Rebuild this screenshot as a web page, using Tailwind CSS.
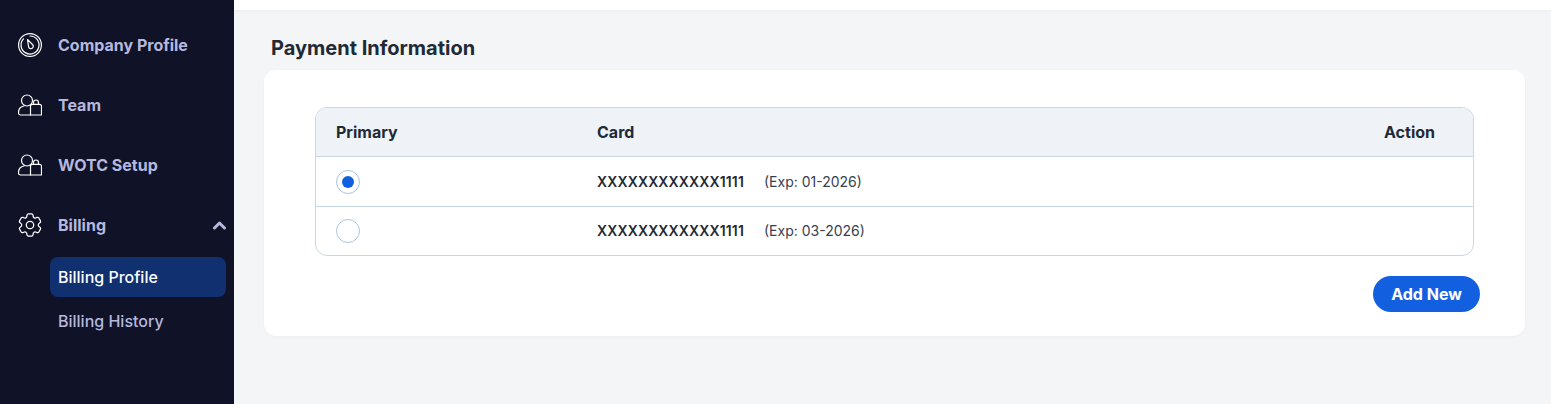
<!DOCTYPE html>
<html lang="en">
<head>
  <meta charset="UTF-8" />
  <meta name="viewport" content="width=device-width, initial-scale=1.0"/>
  <script src="https://cdn.jsdelivr.net/npm/@tailwindcss/browser@4"></script>
  <title>Payment Information</title>
</head>
<body class="font-['Inter',sans-serif] bg-[#f4f5f7] h-[404px] overflow-hidden flex">
  <aside class="w-[234px] h-[404px] shrink-0 bg-[#101227] pt-[15px] text-[#b6b8de] text-base font-bold">
    <a class="flex items-center h-[60px] pl-[18px]">
      <svg class="w-6 h-6 mr-4" viewBox="0 0 24 24" fill="none" stroke="#fff" stroke-width="1.2" stroke-linecap="round" stroke-linejoin="round">
        <circle cx="12" cy="12" r="11.400"/>
        <path d="M12 3A9 9 0 1 1 5.500 5.800"/>
        <path d="M9.500 6.500l5 5a2.400 2.400 0 1 1-3.900 2.500z"/>
      </svg>
      Company Profile
    </a>
    <a class="flex items-center h-[60px] pl-[18px]">
      <svg class="w-6 h-6 mr-4" viewBox="0 0 24 24" fill="none" stroke="#fff" stroke-width="1.2" stroke-linecap="round" stroke-linejoin="round">
        <circle cx="9" cy="7.500" r="5.500"/>
        <path d="M12.500 22H2.500a2 2 0 0 1-2-2v-.5c0-3.500 2.500-6 5.500-6.500"/>
        <path d="M12.500 13.300a2 2 0 0 1 2-2h7a2 2 0 0 1 2 2V22h-11z"/>
        <path d="M15.500 11.300V9.500a2.500 2.500 0 0 1 5 0v1.800"/>
      </svg>
      Team
    </a>
    <a class="flex items-center h-[60px] pl-[18px]">
      <svg class="w-6 h-6 mr-4" viewBox="0 0 24 24" fill="none" stroke="#fff" stroke-width="1.2" stroke-linecap="round" stroke-linejoin="round">
        <circle cx="9" cy="7.500" r="5.500"/>
        <path d="M12.500 22H2.500a2 2 0 0 1-2-2v-.5c0-3.500 2.500-6 5.500-6.500"/>
        <path d="M12.500 13.300a2 2 0 0 1 2-2h7a2 2 0 0 1 2 2V22h-11z"/>
        <path d="M15.500 11.300V9.500a2.500 2.500 0 0 1 5 0v1.800"/>
      </svg>
      WOTC Setup
    </a>
    <a class="flex items-center h-[60px] pl-[18px] pr-[7px]">
      <svg class="w-6 h-6 mr-4" viewBox="2.300 2.300 19.400 19.400" fill="none" stroke="#fff" stroke-width="1" stroke-linecap="round" stroke-linejoin="round">
        <path d="M9.594 3.940c.09-.542.56-.94 1.110-.94h2.593c.55 0 1.020.398 1.110.94l.213 1.281c.063.374.313.686.645.870.074.040.147.083.22.127.325.196.72.257 1.075.124l1.217-.456a1.125 1.125 0 0 1 1.370.490l1.296 2.247a1.125 1.125 0 0 1-.26 1.431l-1.003.827c-.293.241-.438.613-.43.992a7.723 7.723 0 0 1 0 .255c-.008.378.137.75.43.991l1.004.827c.424.35.534.955.26 1.430l-1.298 2.247a1.125 1.125 0 0 1-1.369.491l-1.217-.456c-.355-.133-.75-.072-1.076.124a6.470 6.470 0 0 1-.22.128c-.331.183-.581.495-.644.869l-.213 1.281c-.09.543-.56.94-1.110.94h-2.594c-.55 0-1.019-.398-1.110-.94l-.213-1.281c-.062-.374-.312-.686-.644-.87a6.520 6.520 0 0 1-.22-.127c-.325-.196-.72-.257-1.076-.124l-1.217.456a1.125 1.125 0 0 1-1.369-.49l-1.297-2.247a1.125 1.125 0 0 1 .26-1.431l1.004-.827c.292-.24.437-.613.43-.991a6.932 6.932 0 0 1 0-.255c.007-.38-.138-.751-.43-.992l-1.004-.827a1.125 1.125 0 0 1-.26-1.430l1.297-2.247a1.125 1.125 0 0 1 1.370-.491l1.216.456c.356.133.751.072 1.076-.124.072-.044.146-.086.22-.128.332-.183.582-.495.644-.869l.214-1.280Z"/>
        <circle cx="12" cy="12" r="3"/>
      </svg>
      Billing
      <svg class="ml-auto mr-[1px] w-[13px] h-[10px]" viewBox="0 0 13 10" fill="none" stroke="#b6b8de" stroke-width="3" stroke-linecap="round" stroke-linejoin="round">
        <path d="M1.500 8l5-5 5 5"/>
      </svg>
    </a>
    <div class="pl-[50px] pr-2 mt-[2px] flex flex-col gap-1 font-medium">
      <a class="flex items-center h-10 px-2 rounded-lg bg-[#103070] text-white">Billing Profile</a>
      <a class="flex items-center h-10 px-2">Billing History</a>
    </div>
  </aside>
  <main class="flex-1 min-w-0">
    <div class="h-[10px] bg-white shadow-[0_2px_4px_rgba(0,0,0,0.03)]"></div>
    <div class="pl-[30px] pr-[26px]">
      <h1 class="pl-[7px] pt-[25px] h-[60px] text-xl leading-[26px] font-bold text-[#1f2a37]">Payment Information</h1>
      <section class="h-[266px] bg-white rounded-xl shadow-[0_1px_3px_rgba(0,0,0,0.04)] pt-[37px] pl-[51px] pr-[45px]">
        <div class="w-[1159px] border border-[#c6d8e6] rounded-xl overflow-hidden text-[#1f2a37]">
          <div class="flex items-center h-[49px] bg-[#eff2f7] border-b border-[#c6d8e6] text-base font-bold">
            <span class="w-[281px] pl-5">Primary</span>
            <span>Card</span>
            <span class="ml-auto pr-[38px]">Action</span>
          </div>
          <div class="flex items-center h-[50px] border-b border-[#c6d8e6]">
            <span class="w-[281px] pl-5">
              <span class="flex items-center justify-center w-6 h-6 rounded-full border border-[#a9c6e0]">
                <span class="w-3 h-3 rounded-full bg-[#1260e0]"></span>
              </span>
            </span>
            <span class="w-[167px] text-sm font-semibold tracking-[0.15px]">XXXXXXXXXXXX1111</span>
            <span class="text-sm text-[#374151]">(Exp: 01-2026)</span>
          </div>
          <div class="flex items-center h-[48px]">
            <span class="w-[281px] pl-5">
              <span class="block w-6 h-6 rounded-full border border-[#a9c6e0]"></span>
            </span>
            <span class="w-[167px] text-sm font-semibold tracking-[0.15px]">XXXXXXXXXXXX1111</span>
            <span class="text-sm text-[#374151]">(Exp: 03-2026)</span>
          </div>
        </div>
        <div class="flex justify-end mt-5">
          <button class="w-[107px] h-9 rounded-full bg-[#1260e0] text-white text-base font-bold">Add New</button>
        </div>
      </section>
    </div>
  </main>
</body>
</html>
